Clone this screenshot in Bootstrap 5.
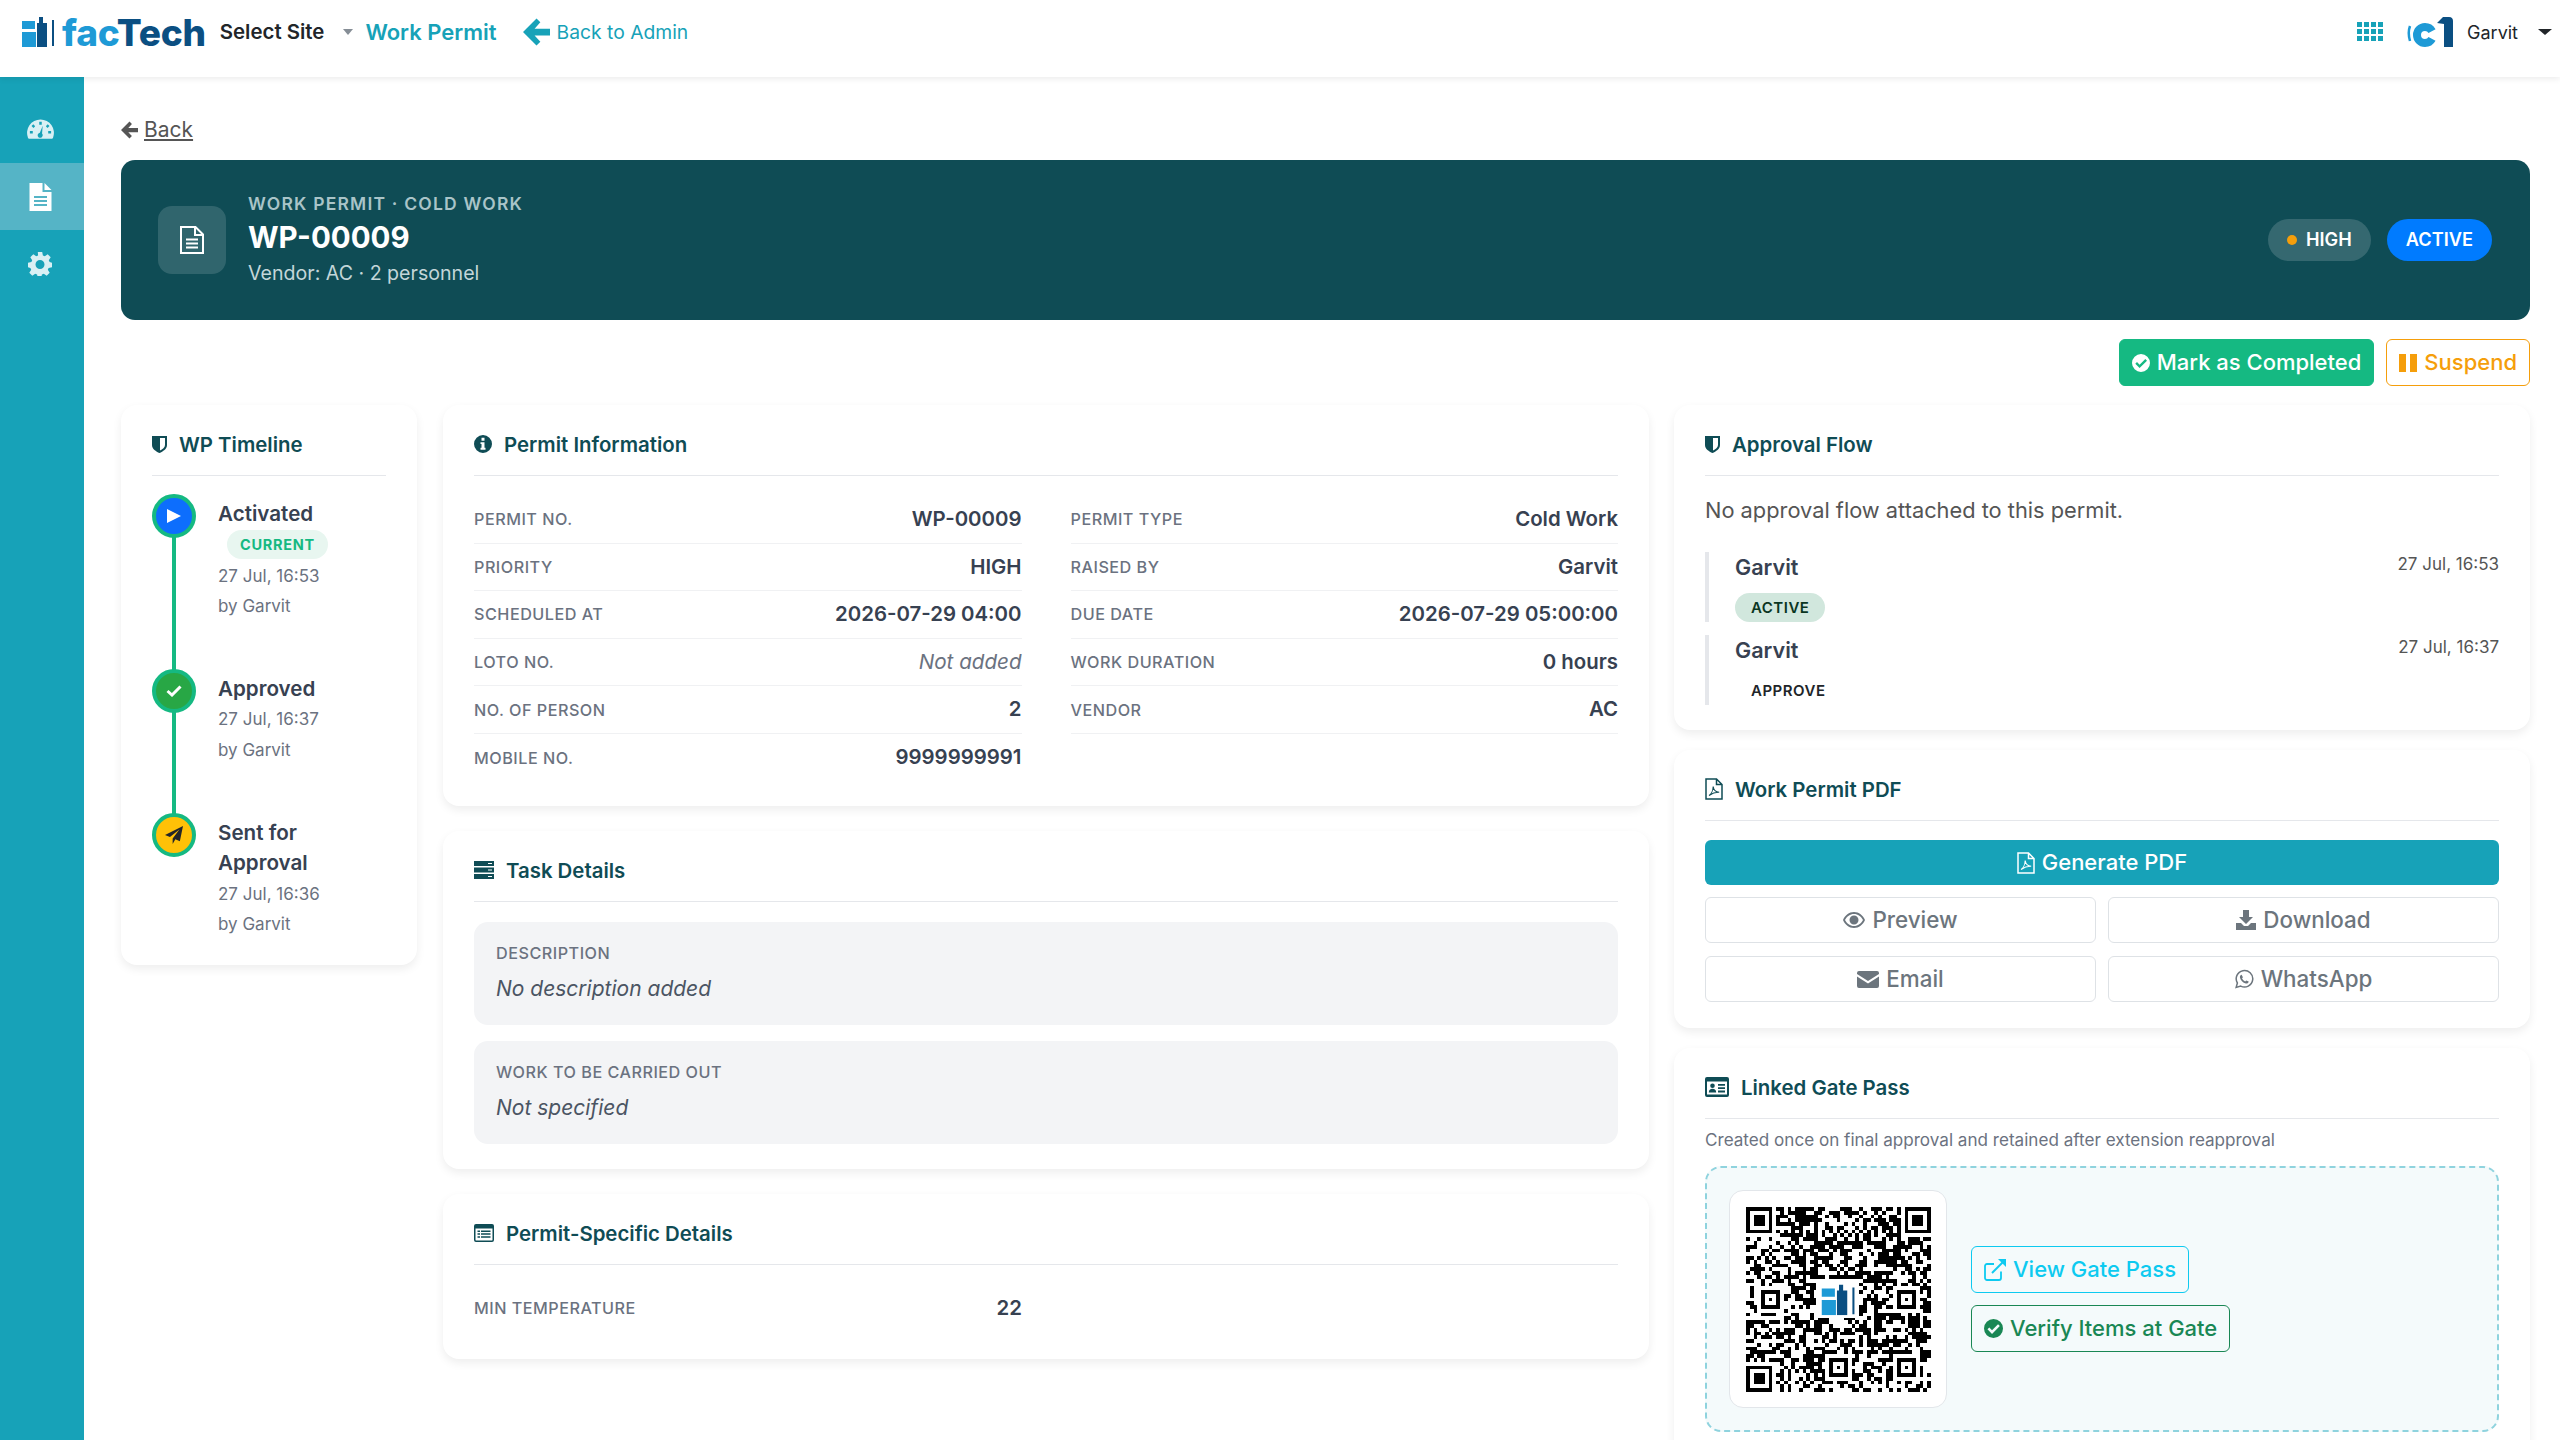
<!DOCTYPE html>
<html lang="en">
<head>
  <meta charset="UTF-8">
  <title>Work Permit WP-00009</title>
  <meta name="viewport" content="width=device-width, initial-scale=1">
  <link href="https://cdn.jsdelivr.net/npm/bootstrap@5.3.0/dist/css/bootstrap.min.css" rel="stylesheet">
  <style>
    html, body { height: 100%; overflow: hidden; }
    body { font-family: Inter, "Liberation Sans", sans-serif; color: #374151; background: #fff; }
    .top-bar { height: 77px; background: #fff; box-shadow: 0 2px 6px rgba(0,0,0,.08); position: relative; z-index: 2; padding: 0 8px 13px 22px; }
    .brand-text { font-size: 37px; font-weight: 800; letter-spacing: -.2px; line-height: 1; margin-left: 7px; }
    .brand-a { color: #1e9ad6; }
    .brand-b { color: #0b4f82; }
    .site-pick { font-size: 20.4px; font-weight: 600; color: #212529; margin-left: 14px; }
    .caret-grey { width: 0; height: 0; border: 5px solid transparent; border-top: 6px solid #868e96; border-bottom: 0; margin: 0 12px 0 19px; }
    .caret-dark { width: 0; height: 0; border: 7px solid transparent; border-top: 6px solid #212529; border-bottom: 0; margin-left: 20px; }
    .crumb-main { font-size: 22px; font-weight: 600; color: #17a2b8; }
    .crumb-back { font-size: 19.3px; color: #17a2b8; margin-left: 26px; gap: 7px; }
    .user-name { font-size: 18px; color: #212529; margin-left: 14px; }

    .app-body { height: calc(100vh - 77px); }
    .side-rail { width: 84px; flex: none; background: #17a2b8; padding-top: 19px; }
    .rail-item { height: 67px; color: #d9f0f4; padding-right: 4px; }
    .rail-item.is-on { background: #55b4c6; color: #fff; }
    .page-area { flex: 1; min-width: 0; overflow: hidden; padding: 38px 30px 0 37px; }

    .back-link { font-size: 21px; line-height: 30px; color: #555; gap: 6px; margin-bottom: 15px; }
    .back-link span { text-decoration: underline; }
    .hero-bar { height: 160px; background: #0f4c55; border-radius: 14px; padding: 0 38px 0 37px; color: #fff; }
    .hero-icon { width: 68px; height: 68px; border-radius: 14px; background: rgba(255,255,255,.14); margin-right: 22px; }
    .hero-kicker { font-size: 17.5px; font-weight: 600; letter-spacing: 1.2px; color: #a9c4c8; line-height: 24px; margin-top: -3px; margin-bottom: 2px; }
    .hero-title { font-size: 29.5px; font-weight: 700; line-height: 38px; }
    .hero-sub { font-size: 19.6px; color: #c3d6d9; line-height: 30px; margin-top: 2px; margin-bottom: -3px; }
    .hero-pill { height: 42px; border-radius: 21px; font-size: 18.2px; font-weight: 600; padding: 0 19px; }
    .pill-soft { background: rgba(255,255,255,.16); gap: 9px; }
    .pill-blue { background: #007bff; }
    .dot-amber { width: 10px; height: 10px; border-radius: 50%; background: #f59e0b; }

    .act-row { margin: 19px 0; gap: 12px; }
    .act-btn { height: 47px; font-size: 22px; font-weight: 500; border-radius: 6px; padding: 0 12px; gap: 7px; }
    .act-done { background: #15b982; border: 1px solid #15b982; color: #fff; }
    .act-hold { background: #fff; border: 1px solid #f59e0b; color: #f59e0b; }

    .col-left { width: 296px; flex: none; margin-right: 26px; }
    .col-mid { width: 1206px; flex: none; margin-right: 25px; gap: 25px; }
    .col-right { width: 856px; flex: none; gap: 20px; }
    .panel { background: #fff; border-radius: 16px; box-shadow: 0 4px 10px rgba(0,0,0,.07); padding: 0 31px 25px; }
    .panel-head { height: 71px; padding-top: 25px; border-bottom: 1px solid #e5e7eb; font-size: 20.4px; font-weight: 600; line-height: 29px; color: #0f4c55; gap: 12px; }

    .step { position: relative; padding-left: 66px; margin-top: 20px; padding-top: 5px; padding-bottom: 49px; }
    .step:last-child { padding-bottom: 0; }
    .step-dot { position: absolute; left: 0; top: 0; width: 44px; height: 44px; border-radius: 50%; border: 4px solid #15b982; z-index: 1; color: #fff; }
    .step-line { position: absolute; left: 20px; top: 40px; bottom: -26px; width: 4px; background: #15b982; }
    .step + .step { margin-top: -2px; }
    .step-first { margin-top: 18px; }
    .step-name { font-size: 20.6px; font-weight: 600; line-height: 30.6px; color: #374151; }
    .step-meta { font-size: 17px; line-height: 30.6px; color: #6b7280; }
    .dot-green { background: #28a745; }
    .tag-now { display: inline-block; margin-left: 9px; margin-bottom: 2px; height: 29px; line-height: 29px; padding: 0 13px; border-radius: 15px; background: #e8f6f0; color: #15b982; font-size: 14.5px; font-weight: 700; letter-spacing: .7px; }

    .info-wrap { margin-top: 20px; margin-bottom: -1px; display: grid; grid-template-columns: 1fr 1fr; column-gap: 49px; }
    .info-cell { height: 47.6px; }
    .info-line { border-bottom: 1px solid #f0f1f3; }
    .info-key { font-size: 16.2px; font-weight: 500; letter-spacing: .5px; color: #6b7280; text-transform: uppercase; }
    .info-val { font-size: 20.4px; font-weight: 600; color: #374151; }
    .info-none { font-size: 20.6px; font-style: italic; color: #6b7280; }
    .half-box { width: 548px; margin-top: 20px; margin-bottom: 2px; }

    .note-box { height: 103px; background: #f3f4f6; border-radius: 14px; padding: 19px 22px; margin-top: 16px; }
    .note-first { margin-top: 20px; }
    .note-txt { font-size: 21px; font-style: italic; color: #4b5563; line-height: 30px; margin-top: 9.5px; }
    .note-box .info-key { line-height: 24px; }

    .flow-none { font-size: 21.8px; line-height: 30px; color: #555; margin: 19px 0 27px; }
    .flow-row { border-left: 4px solid #e5e7eb; padding-left: 26px; height: 70px; }
    .flow-row + .flow-row { margin-top: 13px; }
    .flow-name { font-size: 21.6px; font-weight: 600; line-height: 30px; color: #374151; }
    .flow-time { font-size: 17px; line-height: 24px; color: #555; }
    .flow-tag { display: inline-block; height: 29px; line-height: 29px; padding: 0 16px; border-radius: 15px; font-size: 15px; font-weight: 600; letter-spacing: .5px; color: #212529; margin-top: 11px; }
    .flow-tag-on { background: #d1e7dd; color: #0a3622; }

    .pdf-main { height: 45px; background: #17a2b8; color: #fff; border-radius: 6px; font-size: 22px; font-weight: 500; gap: 7px; margin: 19px 0 12px; }
    .pdf-grid { display: grid; grid-template-columns: 1fr 1fr; gap: 13px 12px; margin-bottom: 1px; }
    .pdf-btn { height: 46px; border: 1px solid #dee2e6; border-radius: 6px; background: #fff; color: #6c757d; font-size: 22.4px; font-weight: 500; gap: 7px; }

    .gate-note { font-size: 17.1px; line-height: 26px; color: #6b7280; margin: 8px 0 13px; }
    .gate-box { height: 266px; border: 2px dashed #8fd3de; border-radius: 16px; background: #f4fafb; padding: 21px 22px; gap: 24px; }
    .qr-card { width: 218px; height: 218px; flex: none; background: #fff; border: 1px solid #e2e6ea; border-radius: 14px; }
    .gate-btn { height: 47px; border-radius: 6px; background: transparent; font-size: 22px; font-weight: 500; padding: 0 12px; gap: 7px; }
    .gate-view { border: 1px solid #0dcaf0; color: #0dcaf0; }
    .gate-check { border: 1px solid #198754; color: #198754; }
  </style>
</head>
<body>

<svg width="0" height="0" class="position-absolute">
  <symbol id="i-mark" viewBox="0 0 33 30">
    <path fill="#1e9ad6" d="M0 4h13v8H0zM0 15h14v15H0z"/>
    <path fill="#0b4f82" d="M15 6h2V0h4v6h4v24H15z"/>
    <path fill="#0b4f82" d="M30 3h2v26h-2z"/>
  </symbol>
  <symbol id="i-shield" viewBox="0 0 15 18">
    <path fill="currentColor" fill-rule="evenodd" d="M0 1h15v9c0 4-4 6.500-7.500 8C4 16.500 0 14 0 10zM8 3v12.400c2.500-1.200 5-3 5-5.400V3z"/>
  </symbol>
  <symbol id="i-info" viewBox="0 0 18 18">
    <path fill="currentColor" fill-rule="evenodd" d="M9 0a9 9 0 1 1 0 18A9 9 0 0 1 9 0zM7.500 2.800v2.900h3V2.800zM6.500 7.300v1.800h1v3.700h-1v1.900h5v-1.900h-1V7.300z"/>
  </symbol>
  <symbol id="i-rows" viewBox="0 0 20 18">
    <path fill="currentColor" fill-rule="evenodd" d="M0 0h20v5H0zM14 2v1h4V2zM0 6.500h20v5H0zM14 8.500v1h4v-1zM0 13h20v5H0zM14 15v1h4v-1z"/>
  </symbol>
  <symbol id="i-list" viewBox="0 0 20 18">
    <path fill="currentColor" fill-rule="evenodd" d="M2 0h16a2 2 0 0 1 2 2v14a2 2 0 0 1-2 2H2a2 2 0 0 1-2-2V2a2 2 0 0 1 2-2zM1.500 4.500V16c0 .3.200.5.500.5h16c.3 0 .5-.2.500-.5V4.500zM3.500 6.500H6V8H3.500zM7 6.500h9.500V8H7zM3.500 9.300H6v1.500H3.500zM7 9.300h9.500v1.500H7zM3.500 12.200H6v1.500H3.500zM7 12.200h9.500v1.500H7z"/>
  </symbol>
  <symbol id="i-card" viewBox="0 0 24 20">
    <path fill="currentColor" fill-rule="evenodd" d="M2 0h20a2 2 0 0 1 2 2v16a2 2 0 0 1-2 2H2a2 2 0 0 1-2-2V2a2 2 0 0 1 2-2zM2 4.500V17.500h20V4.500zM7.500 6.500a2.300 2.300 0 1 1 0 4.600 2.300 2.300 0 0 1 0-4.600zM3.800 15.500c0-2.500 1.500-3.700 3.700-3.700s3.700 1.200 3.700 3.700zM13 7h7v1.800h-7zM13 10.300h7v1.800h-7zM13 13.600h7v1.800h-7z"/>
  </symbol>
  <symbol id="i-pdf" viewBox="0 0 18 22">
    <path fill="none" stroke="currentColor" stroke-width="1.500" d="M1 1h10.500L17 6.500V21H1zM11.500 1v5.500H17"/>
    <path fill="none" stroke="currentColor" stroke-width="1.100" d="M4 17.500c2-1 4-5 4.200-9 .4 3.500 2.500 5.500 6 5.800-3-.2-7 1-10.200 3.200z"/>
  </symbol>
  <symbol id="i-file" viewBox="0 0 22 28">
    <path fill="currentColor" fill-rule="evenodd" d="M0 0h13v9h9v19H0zM15 0l7 7h-7zM4.500 13v2h13v-2zM4.500 17v2h13v-2zM4.500 21v2h13v-2z"/>
  </symbol>
  <symbol id="i-file-line" viewBox="0 0 24 28">
    <path fill="none" stroke="currentColor" stroke-width="2" d="M1 1h14.500L23 8.500V27H1zM15 1v8h8"/>
    <path fill="currentColor" d="M6 12.500h12v2H6zM6 16.500h12v2H6zM6 20.500h12v2H6z"/>
  </symbol>
  <symbol id="i-gauge" viewBox="0 0 28 24">
    <path fill="currentColor" fill-rule="evenodd" d="M14 1a14 14 0 0 1 13 19c-.3.800-.8 1-1.500 1h-23c-.7 0-1.200-.2-1.500-1A14 14 0 0 1 14 1zM12.700 3.500v3h2.600v-3zM6.500 6l-1.800 1.800 2 2 1.800-1.800zM21.500 6l-2 2 1.800 1.800 2-2zM3 13v2.600h3V13zM22 13v2.600h3V13zM16.300 7.500l-3 7.400a2.600 2.600 0 1 0 2.300.8z"/>
  </symbol>
  <symbol id="i-cog" viewBox="0 0 24 24">
    <path fill="currentColor" fill-rule="evenodd" d="M9.800 0h4.400l.7 3.400 1.900.8L19.700 2.300l3 3-1.900 2.900.8 1.900L24 10.800v4.400l-3.400.7-.8 1.900 1.900 2.900-3 3-2.900-1.900-1.900.8-.7 3.400H9.800l-.7-3.400-1.900-.8-2.900 1.900-3-3 1.900-2.900-.8-1.900L0 15.200v-4.400l3.400-.7.8-1.900L2.300 5.300l3-3 2.900 1.900 1.900-.8zM12 8a4.500 4.500 0 1 0 0 9 4.500 4.500 0 0 0 0-9z"/>
  </symbol>
  <symbol id="i-left" viewBox="0 0 28 28">
    <path fill="currentColor" d="M14 0l4 4-6 6.500h16v7H12l6 6.500-4 4L0 14z"/>
  </symbol>
  <symbol id="i-check-round" viewBox="0 0 18 18">
    <path fill="currentColor" fill-rule="evenodd" d="M9 0a9 9 0 1 1 0 18A9 9 0 0 1 9 0zM13.300 5L7.600 10.700 5 8.100 3.300 9.800l4.300 4.300 7.400-7.400z"/>
  </symbol>
  <symbol id="i-eye" viewBox="0 0 22 16">
    <path fill="currentColor" fill-rule="evenodd" d="M11 0c5 0 9 3.500 11 8-2 4.500-6 8-11 8S2 12.500 0 8c2-4.500 6-8 11-8zM11 2C7 2 3.900 4.500 2 8c1.900 3.500 5 6 9 6s7.100-2.500 9-6c-1.900-3.500-5-6-9-6zM11 3.500a4.500 4.500 0 1 1 0 9 4.500 4.500 0 0 1 0-9z"/>
  </symbol>
  <symbol id="i-down" viewBox="0 0 20 20">
    <path fill="currentColor" d="M7 0h6v7h4l-7 7-7-7h4zM0 13h5l3 3h4l3-3h5v7H0z"/>
  </symbol>
  <symbol id="i-mail" viewBox="0 0 22 17">
    <path fill="currentColor" d="M2 0h18a2 2 0 0 1 2 2v1L11 10 0 3V2a2 2 0 0 1 2-2zM0 5.500l11 7 11-7V15a2 2 0 0 1-2 2H2a2 2 0 0 1-2-2z"/>
  </symbol>
  <symbol id="i-chat" viewBox="0 0 20 20">
    <path fill="none" stroke="currentColor" stroke-width="1.600" d="M1.200 18.800l1.300-4.600A8.700 8.700 0 1 1 6 17.500z"/>
    <path fill="currentColor" d="M7 5.500l1.300 2.700-.9 1.200c.8 1.400 1.900 2.400 3.300 3.100l1.200-1 2.500 1.200c-.3 1.700-1.500 2.400-3 2.100-3-.6-5.700-3.300-6.200-6.300C5 6.800 5.700 5.700 7 5.500z"/>
  </symbol>
  <symbol id="i-open" viewBox="0 0 22 22">
    <path fill="none" stroke="currentColor" stroke-width="1.800" d="M17 12.500V19a2 2 0 0 1-2 2H3a2 2 0 0 1-2-2V7a2 2 0 0 1 2-2h7"/>
    <path fill="none" stroke="currentColor" stroke-width="2" d="M8 14L20 2"/>
    <path fill="currentColor" d="M14 0h8v8z"/>
  </symbol>
  <symbol id="i-plane" viewBox="0 0 20 20">
    <path fill="currentColor" d="M20 0l-3.500 17-5-2.200L8.500 20v-6.200L16 4 5.500 12.200 0 10z"/>
  </symbol>
</svg>

<header class="top-bar d-flex align-items-center">
  <svg width="33" height="30"><use href="#i-mark"/></svg>
  <span class="brand-text"><span class="brand-a">fac</span><span class="brand-b">Tech</span></span>
  <span class="site-pick">Select Site</span>
  <span class="caret-grey"></span>
  <span class="crumb-main">Work Permit</span>
  <span class="crumb-back d-flex align-items-center">
    <svg width="27" height="28"><use href="#i-left"/></svg>Back to Admin
  </span>
  <div class="ms-auto d-flex align-items-center">
    <svg width="26" height="20" viewBox="0 0 26 20" fill="#17a2b8" class="me-4">
      <path d="M0 0h5v5H0zM7 0h5v5H7zM14 0h5v5h-5zM21 0h5v5h-5zM0 7h5v5H0zM7 7h5v5H7zM14 7h5v5h-5zM21 7h5v5h-5zM0 14h5v5H0zM7 14h5v5H7zM14 14h5v5h-5zM21 14h5v5h-5z"/>
    </svg>
    <svg width="46" height="30" viewBox="0 0 46 30">
      <path fill="none" stroke="#1e9ad6" stroke-width="2.500" d="M3 9c-1.500 4-1.500 10 0 15"/>
      <circle cx="18" cy="18" r="8" fill="none" stroke="#1e9ad6" stroke-width="8" stroke-dasharray="42 8.300" stroke-dashoffset="-4"/>
      <path fill="#0b4f82" d="M30 6l6-6h6c3 0 4 2 4 4v26h-9V7z"/>
    </svg>
    <span class="user-name">Garvit</span>
    <span class="caret-dark"></span>
  </div>
</header>

<div class="app-body d-flex">
  <aside class="side-rail">
    <div class="rail-item d-flex align-items-center justify-content-center"><svg width="27" height="24"><use href="#i-gauge"/></svg></div>
    <div class="rail-item is-on d-flex align-items-center justify-content-center"><svg width="23" height="28"><use href="#i-file"/></svg></div>
    <div class="rail-item d-flex align-items-center justify-content-center"><svg width="24" height="24"><use href="#i-cog"/></svg></div>
  </aside>

  <main class="page-area">
    <a class="back-link d-inline-flex align-items-center text-decoration-none" href="#">
      <svg width="17" height="18"><use href="#i-left"/></svg><span>Back</span>
    </a>

    <section class="hero-bar d-flex align-items-center">
      <div class="hero-icon d-flex align-items-center justify-content-center">
        <svg width="24" height="28"><use href="#i-file-line"/></svg>
      </div>
      <div>
        <div class="hero-kicker">WORK PERMIT · COLD WORK</div>
        <div class="hero-title">WP-00009</div>
        <div class="hero-sub">Vendor: AC · 2 personnel</div>
      </div>
      <div class="ms-auto d-flex gap-3">
        <span class="hero-pill pill-soft d-flex align-items-center"><i class="dot-amber"></i>HIGH</span>
        <span class="hero-pill pill-blue d-flex align-items-center">ACTIVE</span>
      </div>
    </section>

    <div class="act-row d-flex justify-content-end">
      <button class="act-btn act-done d-flex align-items-center"><svg width="18" height="18"><use href="#i-check-round"/></svg>Mark as Completed</button>
      <button class="act-btn act-hold d-flex align-items-center">
        <svg width="18" height="18" viewBox="0 0 18 18" fill="currentColor"><path d="M0 0h7v18H0zM11 0h7v18h-7z"/></svg>Suspend
      </button>
    </div>

    <div class="d-flex align-items-start">
      <div class="col-left">
        <div class="panel">
          <div class="panel-head d-flex"><svg width="15" height="28" class="flex-none"><use href="#i-shield"/></svg>WP Timeline</div>
          <div class="step step-first">
            <div class="step-line"></div>
            <div class="step-dot bg-primary d-flex align-items-center justify-content-center">
              <svg width="14" height="14" viewBox="0 0 14 14" fill="#fff"><path d="M0 0l14 7-14 7z"/></svg>
            </div>
            <div class="step-name">Activated</div>
            <span class="tag-now">CURRENT</span>
            <div class="step-meta">27 Jul, 16:53</div>
            <div class="step-meta">by Garvit</div>
          </div>
          <div class="step">
            <div class="step-line"></div>
            <div class="step-dot dot-green d-flex align-items-center justify-content-center">
              <svg width="16" height="12" viewBox="0 0 16 12" fill="none" stroke="#fff" stroke-width="3"><path d="M1.500 6l4.500 4 8.500-8.500"/></svg>
            </div>
            <div class="step-name">Approved</div>
            <div class="step-meta">27 Jul, 16:37</div>
            <div class="step-meta">by Garvit</div>
          </div>
          <div class="step">
            <div class="step-dot bg-warning d-flex align-items-center justify-content-center text-dark">
              <svg width="18" height="18"><use href="#i-plane"/></svg>
            </div>
            <div class="step-name">Sent for Approval</div>
            <div class="step-meta">27 Jul, 16:36</div>
            <div class="step-meta">by Garvit</div>
          </div>
        </div>
      </div>

      <div class="col-mid d-flex flex-column">
        <div class="panel">
          <div class="panel-head d-flex"><svg width="18" height="28"><use href="#i-info"/></svg>Permit Information</div>
          <div class="info-wrap">
            <div class="info-cell info-line d-flex align-items-center justify-content-between"><span class="info-key">Permit No.</span><span class="info-val">WP-00009</span></div>
            <div class="info-cell info-line d-flex align-items-center justify-content-between"><span class="info-key">Permit Type</span><span class="info-val">Cold Work</span></div>
            <div class="info-cell info-line d-flex align-items-center justify-content-between"><span class="info-key">Priority</span><span class="info-val">HIGH</span></div>
            <div class="info-cell info-line d-flex align-items-center justify-content-between"><span class="info-key">Raised By</span><span class="info-val">Garvit</span></div>
            <div class="info-cell info-line d-flex align-items-center justify-content-between"><span class="info-key">Scheduled At</span><span class="info-val">2026-07-29 04:00</span></div>
            <div class="info-cell info-line d-flex align-items-center justify-content-between"><span class="info-key">Due Date</span><span class="info-val">2026-07-29 05:00:00</span></div>
            <div class="info-cell info-line d-flex align-items-center justify-content-between"><span class="info-key">LOTO No.</span><span class="info-none">Not added</span></div>
            <div class="info-cell info-line d-flex align-items-center justify-content-between"><span class="info-key">Work Duration</span><span class="info-val">0 hours</span></div>
            <div class="info-cell info-line d-flex align-items-center justify-content-between"><span class="info-key">No. of Person</span><span class="info-val">2</span></div>
            <div class="info-cell info-line d-flex align-items-center justify-content-between"><span class="info-key">Vendor</span><span class="info-val">AC</span></div>
            <div class="info-cell d-flex align-items-center justify-content-between"><span class="info-key">Mobile No.</span><span class="info-val">9999999991</span></div>
          </div>
        </div>

        <div class="panel">
          <div class="panel-head d-flex"><svg width="20" height="28"><use href="#i-rows"/></svg>Task Details</div>
          <div class="note-box note-first">
            <div class="info-key">Description</div>
            <div class="note-txt">No description added</div>
          </div>
          <div class="note-box">
            <div class="info-key">Work to be carried out</div>
            <div class="note-txt">Not specified</div>
          </div>
        </div>

        <div class="panel">
          <div class="panel-head d-flex"><svg width="20" height="28"><use href="#i-list"/></svg>Permit-Specific Details</div>
          <div class="info-cell half-box d-flex align-items-center justify-content-between"><span class="info-key">Min Temperature</span><span class="info-val">22</span></div>
        </div>
      </div>

      <div class="col-right d-flex flex-column">
        <div class="panel">
          <div class="panel-head d-flex"><svg width="15" height="28"><use href="#i-shield"/></svg>Approval Flow</div>
          <div class="flow-none">No approval flow attached to this permit.</div>
          <div class="flow-row">
            <div class="d-flex justify-content-between"><span class="flow-name">Garvit</span><span class="flow-time">27 Jul, 16:53</span></div>
            <span class="flow-tag flow-tag-on">ACTIVE</span>
          </div>
          <div class="flow-row">
            <div class="d-flex justify-content-between"><span class="flow-name">Garvit</span><span class="flow-time">27 Jul, 16:37</span></div>
            <span class="flow-tag">APPROVE</span>
          </div>
        </div>

        <div class="panel">
          <div class="panel-head d-flex"><svg width="18" height="28"><use href="#i-pdf"/></svg>Work Permit PDF</div>
          <div class="pdf-main d-flex align-items-center justify-content-center"><svg width="18" height="22"><use href="#i-pdf"/></svg>Generate PDF</div>
          <div class="pdf-grid">
            <button class="pdf-btn d-flex align-items-center justify-content-center"><svg width="22" height="16"><use href="#i-eye"/></svg>Preview</button>
            <button class="pdf-btn d-flex align-items-center justify-content-center"><svg width="20" height="20"><use href="#i-down"/></svg>Download</button>
            <button class="pdf-btn d-flex align-items-center justify-content-center"><svg width="22" height="17"><use href="#i-mail"/></svg>Email</button>
            <button class="pdf-btn d-flex align-items-center justify-content-center"><svg width="19" height="20"><use href="#i-chat"/></svg>WhatsApp</button>
          </div>
        </div>

        <div class="panel">
          <div class="panel-head d-flex"><svg width="24" height="28"><use href="#i-card"/></svg>Linked Gate Pass</div>
          <div class="gate-note">Created once on final approval and retained after extension reapproval</div>
          <div class="gate-box d-flex align-items-center">
            <div class="qr-card d-flex align-items-center justify-content-center">
              <svg id="qrCode" width="185" height="185" viewBox="0 0 49 49" shape-rendering="crispEdges"></svg>
            </div>
            <div class="d-flex flex-column align-items-start gap-2">
              <button class="gate-btn gate-view d-flex align-items-center"><svg width="22" height="22"><use href="#i-open"/></svg>View Gate Pass</button>
              <button class="gate-btn gate-check d-flex align-items-center mt-1"><svg width="19" height="19"><use href="#i-check-round"/></svg>Verify Items at Gate</button>
            </div>
          </div>
        </div>
      </div>
    </div>
  </main>
</div>

<script src="https://cdn.jsdelivr.net/npm/bootstrap@5.3.0/dist/js/bootstrap.bundle.min.js"></script>
<script>
  // version 8 style QR: fixed patterns plus a seeded fill
  const size = 49;
  const cells = [];
  let seed = 20260729;
  function rnd() {
    seed = (seed * 1664525 + 1013904223) % 4294967296;
    return seed / 4294967296;
  }
  for (let y = 0; y < size; y++) {
    cells.push([]);
    for (let x = 0; x < size; x++) cells[y].push(rnd() > 0.48);
  }
  function square(cx, cy, r) {
    for (let y = cy - r - 1; y <= cy + r + 1; y++) {
      for (let x = cx - r - 1; x <= cx + r + 1; x++) {
        if (x < 0 || y < 0 || x >= size || y >= size) continue;
        const d = Math.max(Math.abs(x - cx), Math.abs(y - cy));
        if (r === 3) cells[y][x] = d !== 2 && d !== 4;
        else cells[y][x] = d !== 1 && d !== 3;
      }
    }
  }
  [[6, 24], [24, 24], [42, 24], [24, 42], [42, 42]].forEach(p => square(p[0], p[1], 2));
  [[3, 3], [45, 3], [3, 45]].forEach(p => square(p[0], p[1], 3));
  for (let i = 8; i < 41; i++) {
    cells[6][i] = i % 2 === 0;
    cells[i][6] = i % 2 === 0;
  }
  let rects = '';
  for (let y = 0; y < size; y++) {
    for (let x = 0; x < size; x++) {
      if (cells[y][x]) rects += '<rect x="' + x + '" y="' + y + '" width="1" height="1"/>';
    }
  }
  rects += '<rect x="18.5" y="19" width="11.500" height="10.500" fill="#fff"/>';
  rects += '<svg x="20" y="20.500" width="9" height="8.200" viewBox="0 0 33 30" shape-rendering="auto"><use href="#i-mark"/></svg>';
  document.getElementById('qrCode').innerHTML = rects;
</script>

</body>
</html>
